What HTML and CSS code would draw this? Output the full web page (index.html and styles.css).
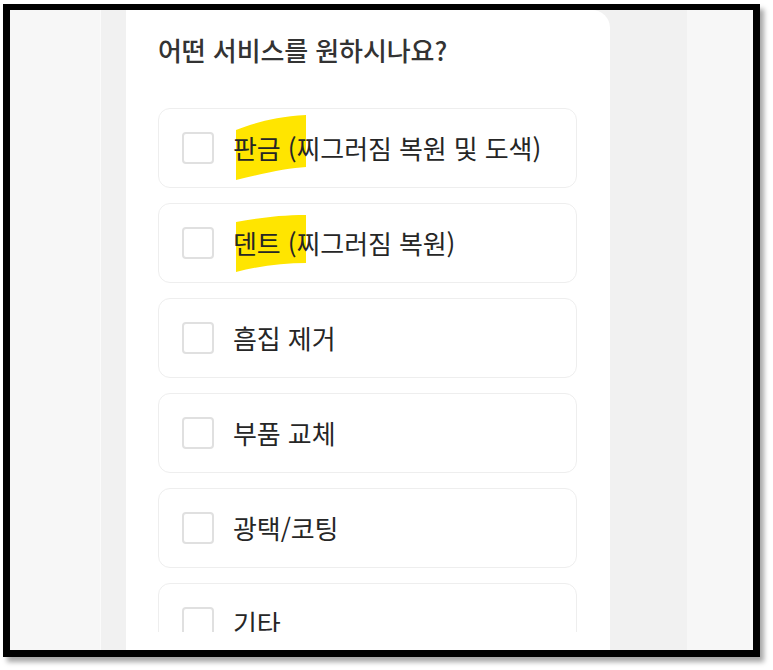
FILE: index.html
```html
<!DOCTYPE html>
<html lang="ko">
<head>
<meta charset="utf-8">
<title>서비스 선택</title>
<link rel="stylesheet" href="styles.css">
</head>
<body>
<div class="frame">
  <div class="gutter gutter-left"></div>
  <div class="column">
    <section class="card">
      <h1 class="title">어떤 서비스를 원하시나요?</h1>
      <div class="scroll">
        <ul class="options">
          <li class="option">
            <span class="check"></span>
            <span class="label">판금 (찌그러짐 복원 및 도색)</span>
            <svg class="marker" width="74" height="68" viewBox="0 0 74 68" aria-hidden="true">
              <path d="M2 15 C 20 8, 40 2, 72 0 L 72 52 C 55 53, 30 58, 2 65 Z" />
            </svg>
          </li>
          <li class="option">
            <span class="check"></span>
            <span class="label">덴트 (찌그러짐 복원)</span>
            <svg class="marker marker-2" width="74" height="62" viewBox="0 0 74 62" aria-hidden="true">
              <path d="M2 8 C 25 4, 45 1, 72 1 L 72 49 C 50 49, 25 52, 2 58 Z" />
            </svg>
          </li>
          <li class="option">
            <span class="check"></span>
            <span class="label">흠집 제거</span>
          </li>
          <li class="option">
            <span class="check"></span>
            <span class="label">부품 교체</span>
          </li>
          <li class="option">
            <span class="check"></span>
            <span class="label">광택/코팅</span>
          </li>
          <li class="option">
            <span class="check"></span>
            <span class="label">기타</span>
          </li>
        </ul>
      </div>
      <div class="card-foot"></div>
    </section>
  </div>
  <div class="gutter gutter-right"></div>
</div>
</body>
</html>
```
FILE: styles.css
```css
* { box-sizing: border-box; }
html, body {
  margin: 0;
  padding: 0;
  background: #ffffff;
  width: 773px;
  height: 670px;
  overflow: hidden;
}
body {
  font-family: "Noto Sans CJK KR", "Noto Sans", sans-serif;
  color: #333333;
}
.frame {
  margin: 4px 0 0 3px;
  width: 757px;
  height: 653px;
  border: 7px solid #000000;
  border-top-width: 6px;
  box-shadow: 4px 5px 5px rgba(0, 0, 0, 0.35);
  display: flex;
  overflow: hidden;
  background: #f7f7f7;
}
.gutter {
  background: #f7f7f7;
  flex: none;
}
.gutter-left {
  width: 91px;
  border-right: 1px solid #fbfbfb;
}
.gutter-right {
  width: 66px;
}
.column {
  flex: none;
  width: 586px;
  background: #f1f1f1;
  padding-left: 25px;
}
.card {
  width: 484px;
  height: 100%;
  background: #ffffff;
  border-top-right-radius: 18px;
  padding: 24px 33px 0 32px;
  display: flex;
  flex-direction: column;
  overflow: hidden;
}
.title {
  margin: 0;
  font-size: 26px;
  line-height: 32px;
  font-weight: 500;
  color: #333333;
  letter-spacing: -0.1px;
  flex: none;
}
.scroll {
  flex: 1;
  overflow: hidden;
  padding-top: 42px;
}
.card-foot {
  flex: none;
  height: 18px;
  background: #ffffff;
}
.options {
  list-style: none;
  margin: 0;
  padding: 0;
  display: flex;
  flex-direction: column;
  gap: 15px;
}
.option {
  position: relative;
  height: 80px;
  border: 1px solid #eeeeee;
  border-radius: 12px;
  display: flex;
  align-items: center;
  padding-left: 23px;
  gap: 19px;
  flex: none;
}
.check {
  width: 32px;
  height: 32px;
  border: 2px solid #e0e0e0;
  border-radius: 4px;
  flex: none;
}
.label {
  position: relative;
  z-index: 1;
  font-size: 26px;
  line-height: 32px;
  color: #262626;
  letter-spacing: -0.1px;
}
.marker {
  position: absolute;
  left: 75px;
  top: 6px;
  z-index: 0;
}
.marker path {
  fill: #ffe500;
}
.marker-2 {
  top: 10px;
}
```
